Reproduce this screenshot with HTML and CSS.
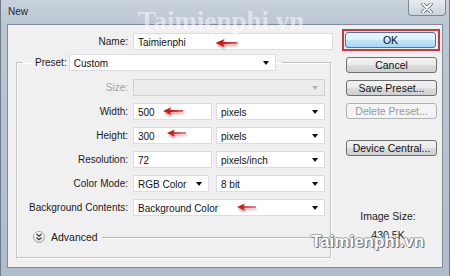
FILE: index.html
```html
<!DOCTYPE html>
<html lang="en">
<head>
  <meta charset="UTF-8">
  <title>New</title>
  <link rel="stylesheet" href="styles.css">
</head>
<body>

  <!-- Finestra di dialogo "New" -->
  <div class="window">
    <div class="titlebar">
      <span class="title">New</span>
      <div class="close">
        <svg width="14" height="10" viewBox="0 0 14 10">
          <path d="M3 1 L11 9 M11 1 L3 9" stroke="#5a6573" stroke-width="3.4" stroke-linecap="round"/>
          <path d="M3 1 L11 9 M11 1 L3 9" stroke="#fff" stroke-width="1.8" stroke-linecap="round"/>
        </svg>
      </div>
    </div>

    <div class="client">
      <!-- Colonna sinistra con i campi -->
      <div class="main">
        <div class="row">
          <span class="lbl lbl-name">Name:</span>
          <div class="field w-name">Taimienphi</div>
        </div>

        <fieldset class="group">
          <legend class="legend">
            <span class="lbl-preset">Preset:</span>
            <div class="field select w-preset">Custom</div>
          </legend>

          <div class="rows">
            <div class="row">
              <span class="lbl lbl-off">Size:</span>
              <div class="field select off w-full"></div>
            </div>
            <div class="row">
              <span class="lbl">Width:</span>
              <div class="field w-num">500</div>
              <div class="field select w-unit">pixels</div>
            </div>
            <div class="row">
              <span class="lbl">Height:</span>
              <div class="field w-num">300</div>
              <div class="field select w-unit">pixels</div>
            </div>
            <div class="row">
              <span class="lbl">Resolution:</span>
              <div class="field w-num">72</div>
              <div class="field select w-unit">pixels/inch</div>
            </div>
            <div class="row">
              <span class="lbl">Color Mode:</span>
              <div class="field select w-mode">RGB Color</div>
              <div class="field select w-unit">8 bit</div>
            </div>
            <div class="row">
              <span class="lbl">Background Contents:</span>
              <div class="field select w-full">Background Color</div>
            </div>
          </div>

          <div class="advanced">
            <span class="adv-icon">
              <svg width="8" height="8" viewBox="0 0 8 8">
                <path d="M1.5 1 L4 3.2 L6.5 1 M1.5 4.5 L4 6.7 L6.5 4.5" fill="none" stroke="#333" stroke-width="1.2"/>
              </svg>
            </span>
            <span class="adv-text">Advanced</span>
            <span class="adv-line"></span>
          </div>
        </fieldset>
      </div>

      <!-- Colonna destra con i bottoni -->
      <div class="side">
        <div class="ok-mark">
          <div class="btn btn-ok">OK</div>
        </div>
        <div class="btn btn-cancel">Cancel</div>
        <div class="btn">Save Preset...</div>
        <div class="btn btn-off">Delete Preset...</div>
        <div class="btn btn-device">Device Central...</div>
        <div class="img-size">
          <div>Image Size:</div>
          <div class="img-value">430.5K</div>
        </div>
      </div>
    </div>

    <!-- Frecce rosse e filigrane sopra il contenuto -->
    <svg class="arrow arrow-name" viewBox="0 0 22 10"><path d="M0 5 L9 1 L7.5 4 L22 4.3 L22 5.6 L7.5 6 L9 9 Z"/></svg>
    <svg class="arrow arrow-width" viewBox="0 0 22 10"><path d="M0 5 L9 1 L7.5 4 L22 4.3 L22 5.6 L7.5 6 L9 9 Z"/></svg>
    <svg class="arrow arrow-height" viewBox="0 0 22 10"><path d="M0 5 L9 1 L7.5 4 L22 4.3 L22 5.6 L7.5 6 L9 9 Z"/></svg>
    <svg class="arrow arrow-bg" viewBox="0 0 22 10"><path d="M0 5 L9 1 L7.5 4 L22 4.3 L22 5.6 L7.5 6 L9 9 Z"/></svg>

    <span class="mark mark-top">Taimienphi.vn</span>
    <span class="mark mark-bottom">Taimienphi.vn</span>
  </div>

</body>
</html>
```

FILE: styles.css
```css
/* Pagina */
body {
  margin: 0;
  font-family: "Liberation Sans", Arial, sans-serif;
  font-size: 10px;
  color: #1b1b1b;
}

/* Cornice della finestra */
.window {
  position: relative;
  width: 450px;
  height: 276px;
  overflow: hidden;
  background: linear-gradient(to bottom, #c9d2dc 0, #bcc7d3 24px, #aebccb 100%);
  box-shadow: inset 1px 0 0 #6f7c8b, inset -1px 0 0 #6f7c8b;
}

.titlebar {
  display: flex;
  height: 24px;
}

.title {
  padding: 6px 0 0 8px;
  font-size: 10px;
  color: #1e2530;
}

.close {
  margin-left: auto;
  margin-right: 4px;
  width: 38px;
  height: 16px;
  box-sizing: border-box;
  border: 1px solid #7c8794;
  border-top: none;
  border-radius: 0 0 4px 4px;
  background: linear-gradient(to bottom, #e8ecf0, #cbd3dc);
  display: flex;
  align-items: center;
  justify-content: center;
}

/* Area interna */
.client {
  display: flex;
  margin: 0 7px;
  height: 244px;
  box-sizing: border-box;
  border: 1px solid #7e8b9a;
  background: #f0f0f0;
}

.main {
  width: 334px;
  padding: 8px 0 0 8px;
  box-sizing: border-box;
}

.row {
  display: flex;
  align-items: center;
  height: 17px;
  gap: 5px;
}

.lbl {
  width: 106px;
  text-align: right;
  white-space: nowrap;
}

.lbl-name {
  width: 112px;
}

.lbl-off {
  color: #a3a3a3;
}

/* Campi e menu */
.field {
  position: relative;
  height: 17px;
  line-height: 17px;
  box-sizing: border-box;
  border: 1px solid #dcdde2;
  background: #fff;
  padding-left: 4px;
  color: #111;
  white-space: nowrap;
}

.select::after {
  content: "";
  position: absolute;
  right: 6px;
  top: 6px;
  border-left: 3.5px solid transparent;
  border-right: 3.5px solid transparent;
  border-top: 4px solid #111;
}

.field.off {
  background: #ececec;
  border-color: #d2d2d2;
}

.select.off::after {
  border-top-color: #b5b5b5;
}

.w-name { width: 200px; }
.w-preset { width: 207px; }
.w-full { width: 192px; }
.w-num { width: 79px; }
.w-unit { width: 109px; margin-left: -1px; }
.w-mode { width: 76px; }
.w-mode + .w-unit { margin-left: 2px; }

/* Gruppo Preset */
.group {
  margin: 4px 0 0 0;
  padding: 0 0 13px 5px;
  width: 315px;
  box-sizing: border-box;
  border: 1px solid #c4c4c4;
  box-shadow: 1px 1px 0 #fff, inset 1px 1px 0 #fff;
}

.legend {
  display: flex;
  align-items: center;
  gap: 2px;
  padding: 0 6px 0 13px;
  height: 17px;
}

.rows {
  display: flex;
  flex-direction: column;
  gap: 7px;
  margin-top: 8px;
}

.advanced {
  display: flex;
  align-items: center;
  height: 14px;
  margin-top: 14px;
  padding-left: 11px;
}

.adv-icon {
  width: 12px;
  height: 12px;
  box-sizing: border-box;
  border: 1px solid #a5a5a5;
  border-radius: 50%;
  background: linear-gradient(to bottom, #fff, #e3e3e3);
  display: flex;
  align-items: center;
  justify-content: center;
}

.adv-text {
  margin-left: 6px;
  font-size: 10.5px;
}

.adv-line {
  flex: 1;
  height: 1px;
  margin-left: 4px;
  background: #b9b9b9;
  box-shadow: 0 1px 0 #fff;
}

/* Bottoni a destra */
.side {
  width: 98px;
  padding-top: 4px;
}

.ok-mark {
  border: 2px solid #d3333b;
  padding: 1px;
  width: 98px;
  box-sizing: border-box;
}

.btn {
  height: 16px;
  line-height: 14px;
  box-sizing: border-box;
  margin: 7px 0 0 4px;
  width: 91px;
  border: 1px solid #707070;
  border-radius: 3px;
  background: linear-gradient(to bottom, #f2f2f2 0, #ebebeb 50%, #dddddd 50%, #cfcfcf 100%);
  text-align: center;
  color: #111;
  font-size: 10.5px;
}

.ok-mark .btn {
  margin: 0;
  border-color: #3c7fb1;
  background: linear-gradient(to bottom, #eaf6fd 0, #d9f0fc 50%, #bee6fd 50%, #a7d9f5 100%);
}

.btn-cancel { margin-top: 6px; }

.btn-off {
  border-color: #adb2b5;
  background: #f4f4f4;
  color: #9a9a9a;
}

.btn-device { margin-top: 21px; }

.img-size {
  margin-top: 54px;
  padding-right: 6px;
  text-align: center;
  font-size: 10.5px;
}

.img-value {
  margin-top: 7px;
}

/* Frecce di annotazione */
.arrow {
  position: absolute;
  height: 10px;
  fill: #d8141b;
  filter: drop-shadow(1px 2px 1px rgba(80, 0, 0, 0.45));
}

.arrow-name { left: 215px; top: 38px; width: 23px; }
.arrow-width { left: 163px; top: 106px; width: 20px; }
.arrow-height { left: 167px; top: 128px; width: 19px; }
.arrow-bg { left: 237px; top: 202px; width: 19px; }

/* Filigrane */
.mark {
  position: absolute;
  line-height: 1;
  white-space: nowrap;
  color: #fff;
}

.mark-top {
  left: 138px;
  top: 8px;
  font-family: "Liberation Serif", serif;
  font-weight: bold;
  font-size: 27px;
  opacity: 0.5;
}

.mark-bottom {
  left: 311px;
  top: 233px;
  font-weight: bold;
  font-size: 17px;
  text-shadow: 1px 1px 0 #777, -1px 0 0 #999, 0 -1px 0 #aaa, 1px 0 1px #666;
}
```
